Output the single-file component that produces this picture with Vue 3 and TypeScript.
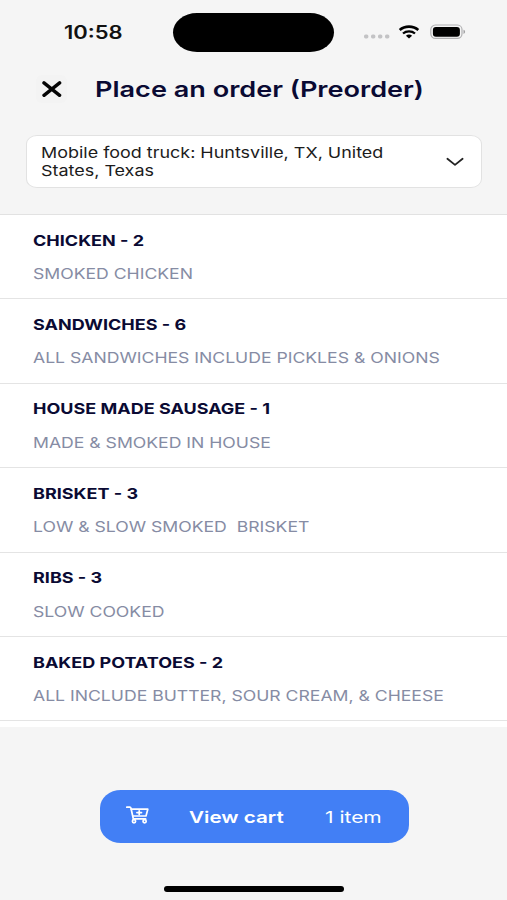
<script setup lang="ts">
interface Category {
  name: string
  count: number
  description: string
}

const location = ['Mobile food truck: Huntsville, TX, United', 'States, Texas']

const categories: Category[] = [
  { name: 'CHICKEN', count: 2, description: 'SMOKED CHICKEN' },
  { name: 'SANDWICHES', count: 6, description: 'ALL SANDWICHES INCLUDE PICKLES & ONIONS' },
  { name: 'HOUSE MADE SAUSAGE', count: 1, description: 'MADE & SMOKED IN HOUSE' },
  { name: 'BRISKET', count: 3, description: 'LOW & SLOW SMOKED\u00a0 BRISKET' },
  { name: 'RIBS', count: 3, description: 'SLOW COOKED' },
  { name: 'BAKED POTATOES', count: 2, description: 'ALL INCLUDE BUTTER, SOUR CREAM, & CHEESE' },
]
</script>

<template>
  <div class="screen">
    <div class="status">
      <div class="clock"><span class="wide">10:58</span></div>
      <div class="island"></div>
      <div class="indicators">
        <svg class="dots" width="26" height="5" viewBox="0 0 26 5" fill="#c3c3c5">
          <rect x="0" y="0.6" width="4.4" height="3.8" rx="1.6" />
          <rect x="7" y="0.6" width="4.4" height="3.8" rx="1.6" />
          <rect x="14" y="0.6" width="4.4" height="3.8" rx="1.6" />
          <rect x="21" y="0.6" width="4.4" height="3.8" rx="1.6" />
        </svg>
        <svg class="wifi" width="22" height="14" viewBox="0 0 22 14">
          <path d="M1.7 5C6.8 0.5 15.2 0.5 20.3 5" fill="none" stroke="#000" stroke-width="2.6" />
          <path d="M5 8.5C8.3 5.6 13.7 5.6 17 8.5" fill="none" stroke="#000" stroke-width="2.3" />
          <path d="M7.9 10.7C9.6 9.2 12.4 9.2 14.1 10.7L11 13.4Z" fill="#000" />
        </svg>
        <svg class="battery" width="36" height="16" viewBox="0 0 36 16">
          <rect x="0.8" y="1" width="31.2" height="13.4" rx="4.6" fill="none" stroke="#b0b0b2" stroke-width="1.2" />
          <rect x="2.9" y="2.9" width="27" height="9.8" rx="3" fill="#000" />
          <path d="M33.5 5.7C35.6 6.3 35.6 9.3 33.5 9.9Z" fill="#a0a0a2" />
        </svg>
      </div>
    </div>

    <header class="header">
      <button class="close" aria-label="Close">
        <svg width="20" height="16" viewBox="0 0 20 16" fill="none" stroke="#050505" stroke-width="3.4" stroke-linecap="round">
          <path d="M2 1.9L17.6 14.3M17.6 1.9L2 14.3" />
        </svg>
      </button>
      <h1 class="title"><span class="wide">Place an order (Preorder)</span></h1>
    </header>

    <div class="select">
      <div class="select-text">
        <div v-for="line in location" :key="line" class="select-line"><span class="wide">{{ line }}</span></div>
      </div>
      <svg width="18" height="10" viewBox="0 0 18 10" fill="none" stroke="#222" stroke-width="1.8" stroke-linecap="round" stroke-linejoin="round">
        <path d="M1.4 1.8L9 7.9L16.6 1.8" />
      </svg>
    </div>

    <main class="list">
      <section v-for="category in categories" :key="category.name" class="row">
        <h2 class="name"><span class="wide">{{ category.name }} - {{ category.count }}</span></h2>
        <p class="desc"><span class="wide">{{ category.description }}</span></p>
      </section>
    </main>

    <button class="cart">
      <svg class="cart-icon" width="25" height="19" viewBox="0 0 25 19" fill="none" stroke="#fff" stroke-width="1.7" stroke-linecap="round" stroke-linejoin="round">
        <path d="M1.8 1.2H4.8Q5.7 1.2 6 2.2L8.3 12.8H20.6" />
        <path d="M6.2 3.2H22.8L21 10H7.9" />
        <path d="M14.2 4.8V8.4M11.9 6.6H16.5" />
        <circle cx="9" cy="15.3" r="1.6" />
        <circle cx="19.6" cy="15.3" r="1.6" />
      </svg>
      <span class="cart-label"><span class="wide">View cart</span></span>
      <span class="cart-count"><span class="wide">1 item</span></span>
    </button>

    <div class="home"></div>
  </div>
</template>

<style>
body {
  margin: 0;
  background: #f5f5f5;
}
</style>

<style scoped>
.screen {
  box-sizing: border-box;
  width: 507px;
  height: 900px;
  overflow: hidden;
  display: flex;
  flex-direction: column;
  background: #f5f5f5;
  font-family: Inter, "Liberation Sans", sans-serif;
  color: #0a0a33;
}

/* The type is set in an expanded width. */
.wide {
  display: inline-block;
  white-space: nowrap;
  transform: scaleX(var(--stretch, 1.22));
  transform-origin: left center;
}

.status {
  flex: none;
  display: flex;
  height: 39px;
  padding-top: 13px;
}

.clock {
  width: 109px;
  padding-left: 64px;
  line-height: 39px;
  font-size: 18px;
  font-weight: 600;
  color: #111;
}

.island {
  width: 161px;
  height: 39px;
  border-radius: 24px / 19.5px;
  background: #000;
}

.indicators {
  display: flex;
  align-items: center;
  height: 37px;
  padding-left: 30px;
}

.dots {
  margin-top: 9px;
}

.wifi {
  margin-left: 8px;
}

.battery {
  margin-left: 10px;
}

.header {
  flex: none;
  display: flex;
  align-items: center;
  height: 36px;
  margin-top: 19px;
  padding-left: 36px;
}

.close {
  display: flex;
  align-items: center;
  justify-content: center;
  width: 31px;
  height: 28px;
  padding: 0;
  border: 0;
  border-radius: 6px;
  background: #f3f3f3;
}

.title {
  --stretch: 1.231;
  margin: 0 0 0 28px;
  font-size: 22px;
  line-height: 35px;
  font-weight: 600;
}

.select {
  --stretch: 1.196;
  flex: none;
  box-sizing: border-box;
  display: flex;
  align-items: center;
  justify-content: space-between;
  width: 456px;
  height: 53px;
  margin: 28px 0 0 26px;
  padding: 0 17px 0 14px;
  border: 1px solid #e2e2e2;
  border-radius: 11px / 9px;
  background: #fff;
}

.select-line {
  height: 18px;
  font-size: 15px;
  line-height: 18px;
  color: #1c1c1c;
}

.list {
  flex: none;
  height: 512px;
  margin-top: 26px;
  border-top: 1px solid #e2e2e2;
  background: #fff;
}

.row {
  box-sizing: border-box;
  height: 84.4px;
  padding: 15.6px 0 0 33px;
  border-bottom: 1px solid #e4e4e4;
}

.name {
  --stretch: 1.2;
  margin: 0;
  font-size: 15px;
  line-height: 20px;
  font-weight: 700;
}

.desc {
  --stretch: 1.19;
  margin: 13.4px 0 0;
  font-size: 14.8px;
  line-height: 20px;
  color: #868ca4;
}

.cart {
  flex: none;
  display: flex;
  align-items: center;
  width: 309px;
  height: 53px;
  margin: 63px 0 0 100px;
  padding: 0 0 0 25px;
  border: 0;
  border-radius: 21px / 18px;
  background: #427ff5;
  color: #fff;
  font: 400 16.5px/24px Inter, "Liberation Sans", sans-serif;
  text-align: left;
}

.cart-icon {
  margin-bottom: 2px;
}

.cart-label {
  --stretch: 1.25;
  width: 136px;
  margin-left: 39px;
  font-weight: 600;
}

.cart-count {
  --stretch: 1.27;
}

.home {
  flex: none;
  width: 180px;
  height: 6px;
  margin: 43px 0 0 164px;
  border-radius: 3px;
  background: #000;
}
</style>
